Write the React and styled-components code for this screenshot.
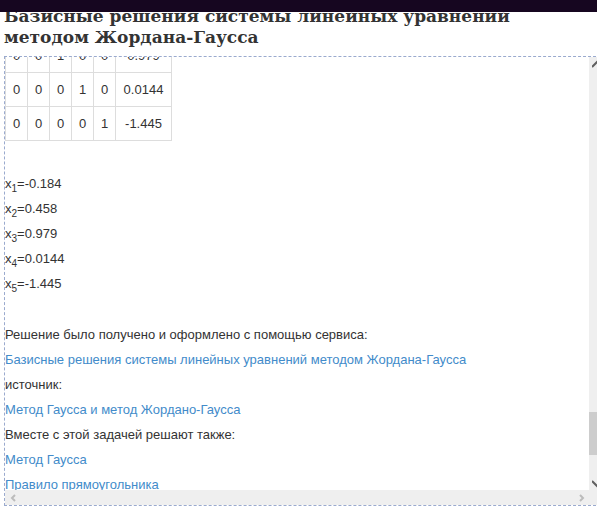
import React from "react";
import styled, { createGlobalStyle } from "styled-components";

const GlobalStyle = createGlobalStyle`
  * { box-sizing: border-box; }
  body {
    margin: 0;
    overflow: hidden;
    background: #fff;
    color: #333;
    font: 13px/25px "Liberation Sans", Arial, sans-serif;
  }
`;

const Page = styled.div`
  height: 100vh;
  display: flex;
  flex-direction: column;
  overflow: hidden;
`;

const TopBar = styled.div`
  height: 12px;
  flex: none;
  background: #160620;
`;

const Header = styled.header`
  height: 44px;
  flex: none;
  padding-left: 4px;
  overflow: hidden;
`;

const Title = styled.h1`
  margin: -6px 0 0;
  max-width: 560px;
  font: bold 17px/21px "DejaVu Serif", Georgia, serif;
`;

const Frame = styled.section`
  flex: 1;
  min-height: 0;
  margin: 0 -9px 6px 4px;
  border: 1px dashed #9aaace;
  display: grid;
  grid-template-columns: minmax(0, 1fr) 16px;
  grid-template-rows: minmax(0, 1fr) 15px;
`;

const Content = styled.main`
  overflow: hidden;
`;

const Matrix = styled.table`
  margin: -19px 0 30px;
  border-collapse: collapse;
`;

const Cell = styled.td`
  height: 34px;
  width: ${(p) => (p.$wide ? 56 : 22)}px;
  padding: 0;
  border: 1px solid #ddd;
  text-align: center;
`;

const Lines = styled.div`
  display: flex;
  flex-direction: column;
  align-items: flex-start;
  margin-bottom: 26px;
  white-space: nowrap;
`;

const Line = styled.span`
  height: 25px;
`;

const Sub = styled.sub`
  font-size: 10px;
  line-height: 0;
`;

const Link = styled.a`
  height: 25px;
  color: #428bca;
  text-decoration: none;
`;

const VerticalBar = styled.div`
  display: flex;
  flex-direction: column;
  background: #efefef;
`;

const HorizontalBar = styled.div`
  grid-column: 1 / -1;
  display: flex;
  justify-content: space-between;
  padding-right: 16px;
  background: #efefef;
`;

const ArrowButton = styled.button`
  display: flex;
  align-items: center;
  justify-content: center;
  flex: none;
  width: 16px;
  height: 15px;
  padding: 0;
  border: 0;
  background: transparent;
  color: ${(p) => (p.$muted ? "#bcbcbc" : "#606060")};
`;

const Track = styled.div`
  flex: 1;
  display: flex;
  flex-direction: column;
  justify-content: flex-end;
  padding-bottom: 20px;
`;

const Thumb = styled.div`
  height: 43px;
  background: #cdcdcd;
`;

const arrows = {
  up: "M0 7 L5 2 L10 7",
  down: "M0 3 L5 8 L10 3",
  left: "M7 2 L4 5 L7 8",
  right: "M4 2 L7 5 L4 8",
};

function Arrow({ direction, label, muted }) {
  return (
    <ArrowButton type="button" aria-label={label} $muted={muted}>
      <svg
        width="10"
        height="10"
        viewBox="0 0 10 10"
        fill="none"
        stroke="currentColor"
        strokeWidth="2"
      >
        <path d={arrows[direction]} />
      </svg>
    </ArrowButton>
  );
}

const rows = [
  ["0", "0", "1", "0", "0", "0.979"],
  ["0", "0", "0", "1", "0", "0.0144"],
  ["0", "0", "0", "0", "1", "-1.445"],
];

const roots = ["-0.184", "0.458", "0.979", "0.0144", "-1.445"];

export default function App() {
  return (
    <Page>
      <GlobalStyle />
      <TopBar />
      <Header>
        <Title>Базисные решения системы линейных уравнений методом Жордана-Гаусса</Title>
      </Header>
      <Frame>
        <Content>
          <Matrix>
            <tbody>
              {rows.map((row, r) => (
                <tr key={r}>
                  {row.map((value, c) => (
                    <Cell key={c} $wide={c === 5}>{value}</Cell>
                  ))}
                </tr>
              ))}
            </tbody>
          </Matrix>
          <Lines>
            {roots.map((value, i) => (
              <Line key={i}>x<Sub>{i + 1}</Sub>={value}</Line>
            ))}
          </Lines>
          <Lines>
            <Line>Решение было получено и оформлено с помощью сервиса:</Line>
            <Link href="#basis">Базисные решения системы линейных уравнений методом Жордана-Гаусса</Link>
            <Line>источник:</Line>
            <Link href="#jordan-gauss">Метод Гаусса и метод Жордано-Гаусса</Link>
            <Line>Вместе с этой задачей решают также:</Line>
            <Link href="#gauss">Метод Гаусса</Link>
            <Link href="#rectangle">Правило прямоугольника</Link>
          </Lines>
        </Content>
        <VerticalBar>
          <Arrow direction="up" label="Вверх" />
          <Track><Thumb /></Track>
          <Arrow direction="down" label="Вниз" />
        </VerticalBar>
        <HorizontalBar>
          <Arrow direction="left" label="Влево" muted />
          <Arrow direction="right" label="Вправо" muted />
        </HorizontalBar>
      </Frame>
    </Page>
  );
}
